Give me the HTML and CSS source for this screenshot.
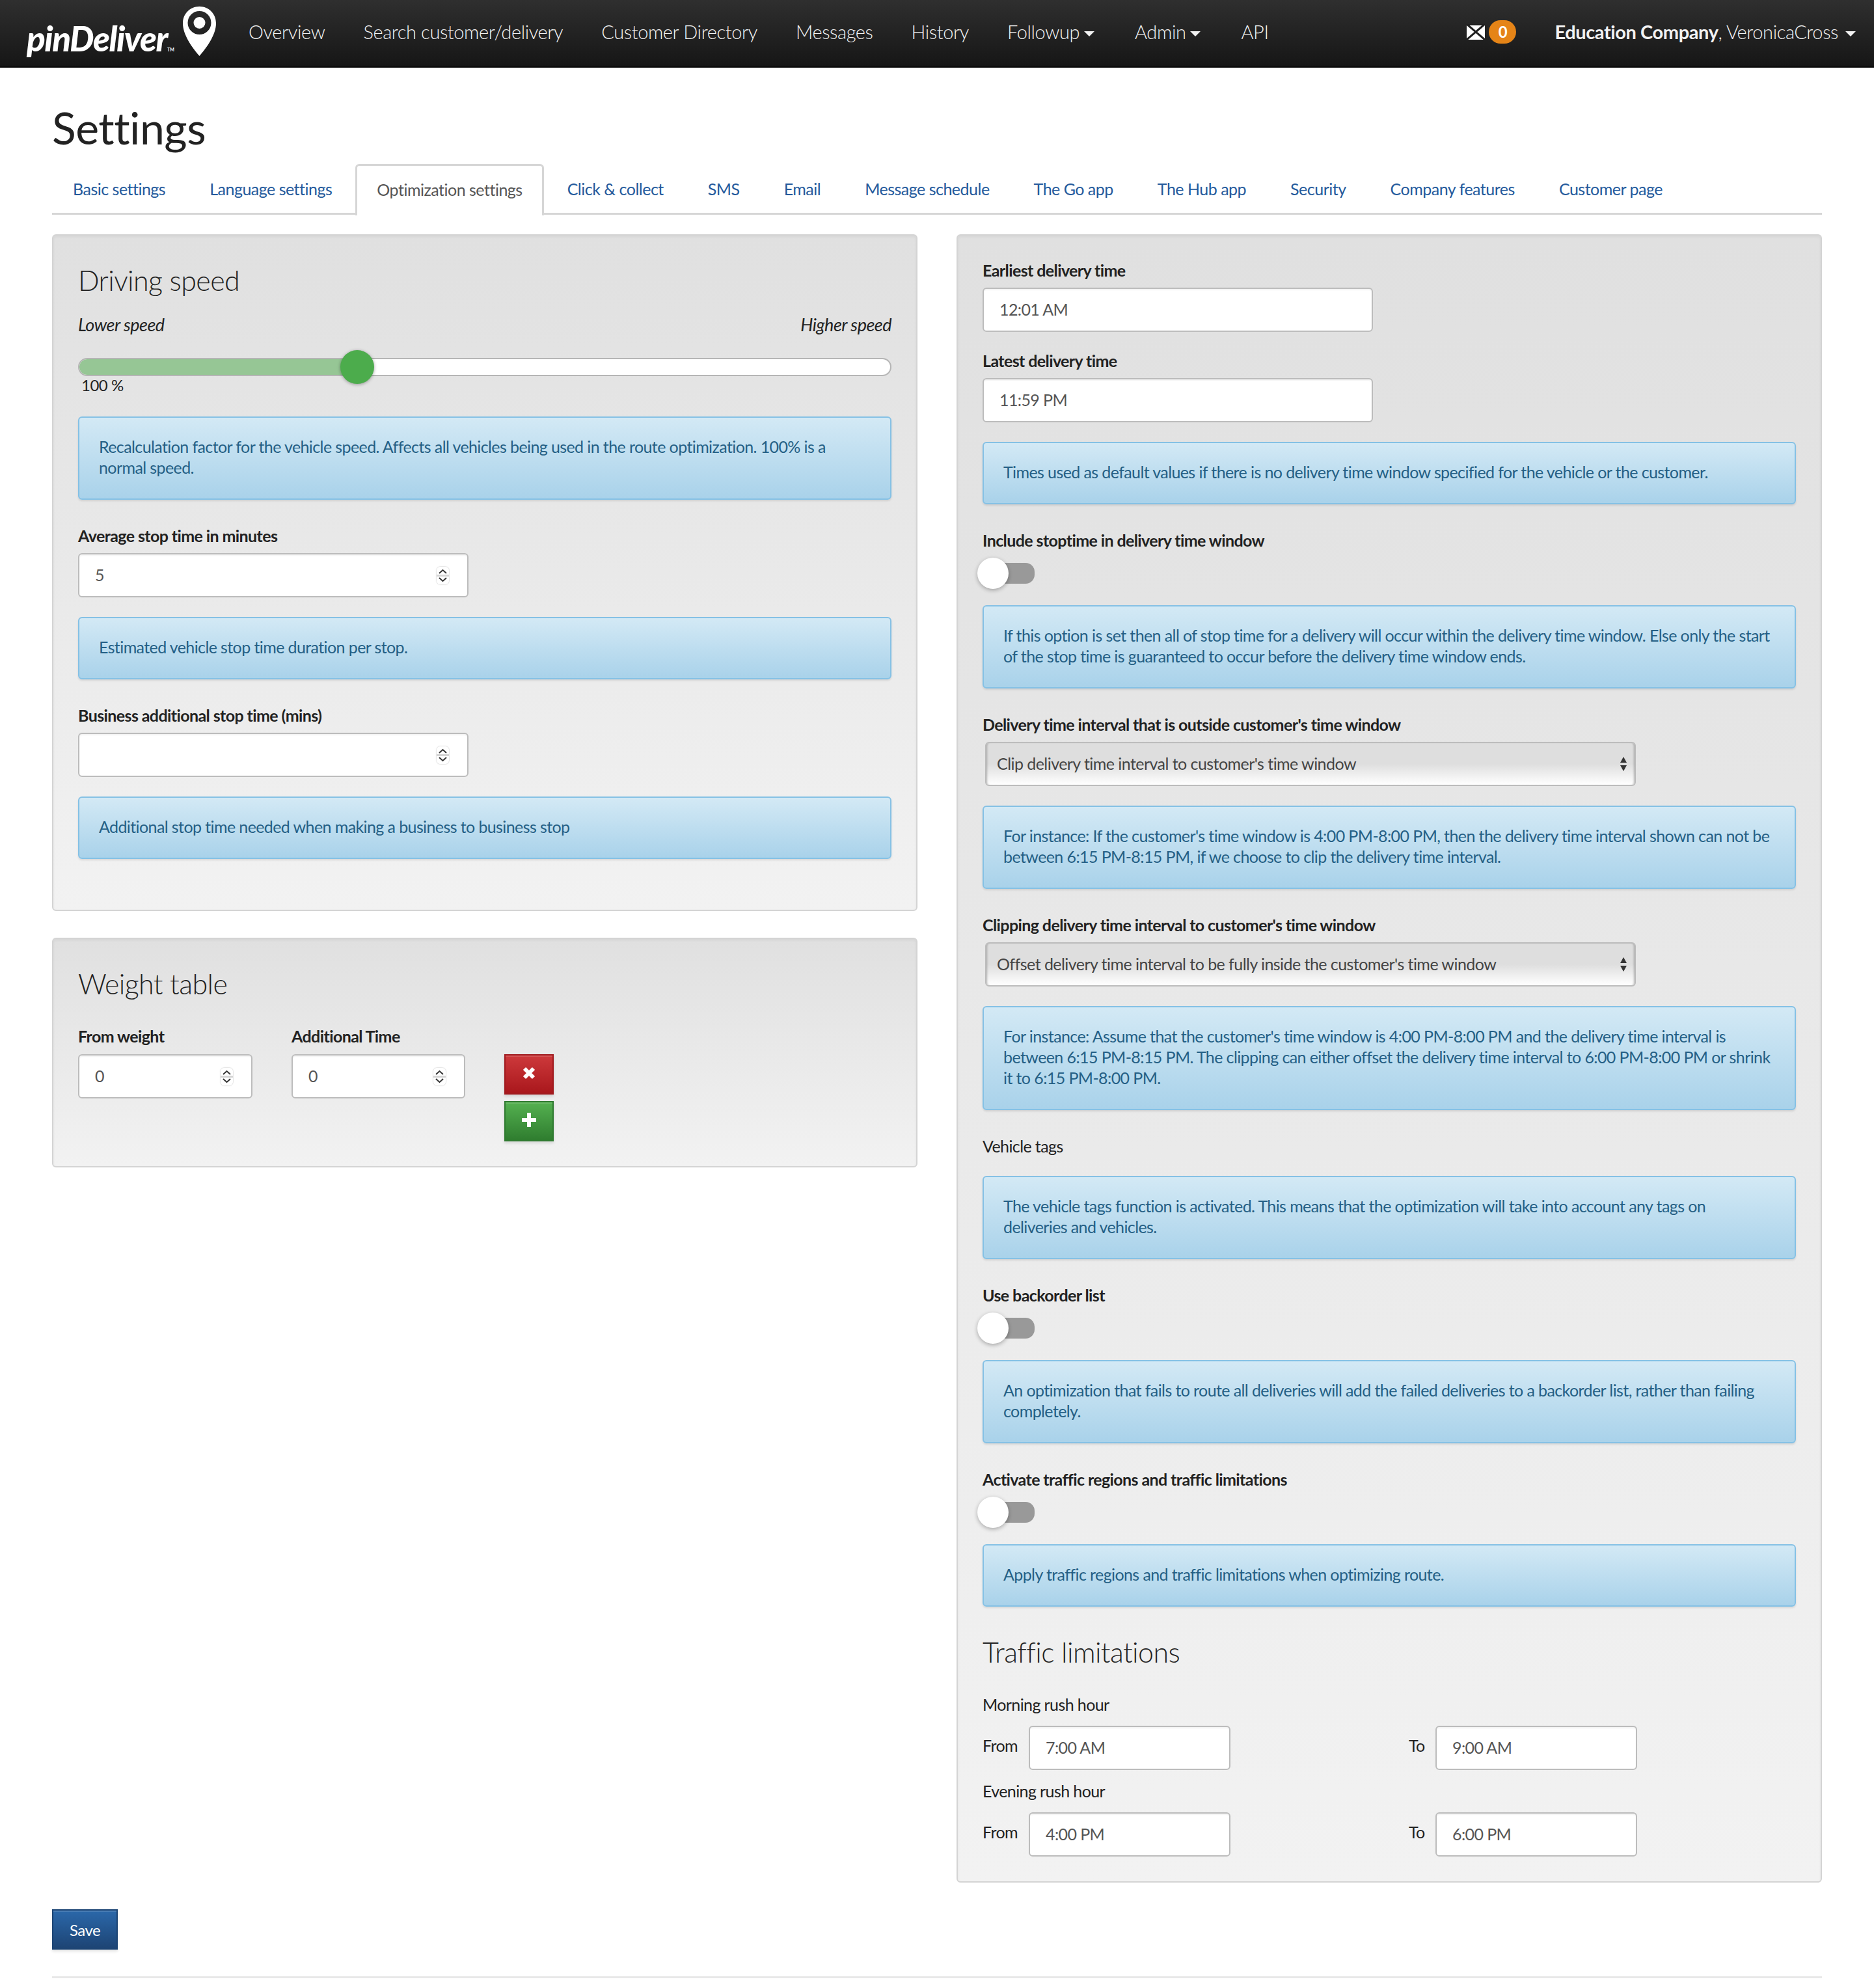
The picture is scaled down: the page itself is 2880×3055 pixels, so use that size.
FILE: index.html
```html
<!DOCTYPE html>
<html lang="en">
<head>
<meta charset="utf-8">
<title>Settings</title>
<link rel="stylesheet" href="styles.css">
</head>
<body>
<header class="navbar">
  <a class="brand">
    <span class="brand-text">pinDeliver<sup class="tm">TM</sup></span>
    <svg class="pin" viewBox="0 0 51 76" width="51" height="76"><path fill="#fff" fill-rule="evenodd" d="M25.5 0C11 0 0 11 0 26c0 17 14 37 25.500 50C37 63 51 43 51 26 51 11 40 0 25.500 0zM25.500 7a18 18 0 1 1 0 36a18 18 0 1 1 0-36z"/><circle cx="25.500" cy="25" r="9" fill="#fff"/></svg>
  </a>
  <nav class="nav-links">
    <a>Overview</a>
    <a>Search customer/delivery</a>
    <a>Customer Directory</a>
    <a>Messages</a>
    <a>History</a>
    <a>Followup<i class="caret"></i></a>
    <a>Admin<i class="caret"></i></a>
    <a>API</a>
  </nav>
  <div class="nav-right">
    <svg class="mail" viewBox="0 0 28 24" width="28" height="24"><rect width="28" height="24" fill="#fff"/><path d="M0 0l28 24M28 0L0 24" fill="none" stroke="#1f1f1f" stroke-width="3"/><path d="M0 1h28" stroke="#1f1f1f" stroke-width="2"/></svg>
    <span class="badge">0</span>
    <span class="user"><b>Education Company</b>, VeronicaCross<i class="caret"></i></span>
  </div>
</header>

<main class="page">
  <h1 class="title">Settings</h1>
  <ul class="tabs">
    <li>Basic settings</li>
    <li>Language settings</li>
    <li class="active">Optimization settings</li>
    <li>Click &amp; collect</li>
    <li>SMS</li>
    <li>Email</li>
    <li>Message schedule</li>
    <li>The Go app</li>
    <li>The Hub app</li>
    <li>Security</li>
    <li>Company features</li>
    <li>Customer page</li>
  </ul>

  <div class="columns">
    <div class="col">
      <section class="panel panel-speed">
        <h3 class="panel-title">Driving speed</h3>
        <div class="range-labels"><em>Lower speed</em><em>Higher speed</em></div>
        <div class="slider"><div class="slider-fill"></div><div class="slider-thumb"></div></div>
        <div class="percent">100 %</div>
        <p class="alert alert-first">Recalculation factor for the vehicle speed. Affects all vehicles being used in the route optimization. 100% is a normal speed.</p>
        <label class="lbl">Average stop time in minutes</label>
        <div class="input w600">5<span class="spin"><svg viewBox="0 0 19 27" width="19" height="27"><path d="M4 10l5.500-5 5.500 5M4 17l5.500 5 5.500-5" fill="none" stroke="#333" stroke-width="2"/></svg></span></div>
        <p class="alert">Estimated vehicle stop time duration per stop.</p>
        <label class="lbl">Business additional stop time (mins)</label>
        <div class="input w600"><span class="spin"><svg viewBox="0 0 19 27" width="19" height="27"><path d="M4 10l5.500-5 5.500 5M4 17l5.500 5 5.500-5" fill="none" stroke="#333" stroke-width="2"/></svg></span></div>
        <p class="alert">Additional stop time needed when making a business to business stop</p>
      </section>

      <section class="panel panel-weight">
        <h3 class="panel-title">Weight table</h3>
        <div class="weight-row">
          <div class="weight-field">
            <label class="lbl">From weight</label>
            <div class="input">0<span class="spin"><svg viewBox="0 0 19 27" width="19" height="27"><path d="M4 10l5.500-5 5.500 5M4 17l5.500 5 5.500-5" fill="none" stroke="#333" stroke-width="2"/></svg></span></div>
          </div>
          <div class="weight-field">
            <label class="lbl">Additional Time</label>
            <div class="input">0<span class="spin"><svg viewBox="0 0 19 27" width="19" height="27"><path d="M4 10l5.500-5 5.500 5M4 17l5.500 5 5.500-5" fill="none" stroke="#333" stroke-width="2"/></svg></span></div>
          </div>
          <div class="weight-actions">
            <button class="btn btn-red"><svg viewBox="0 0 22 22" width="22" height="22"><path d="M4 4l14 14M18 4L4 18" stroke="#fff" stroke-width="6" fill="none"/></svg></button>
            <button class="btn btn-green"><svg viewBox="0 0 24 24" width="24" height="24"><path d="M12 1v22M1 12h22" stroke="#fff" stroke-width="6" fill="none"/></svg></button>
          </div>
        </div>
      </section>
    </div>

    <section class="panel panel-right">
      <label class="lbl">Earliest delivery time</label>
      <div class="input w600 stack">12:01 AM</div>
      <label class="lbl">Latest delivery time</label>
      <div class="input w600">11:59 PM</div>
      <p class="alert">Times used as default values if there is no delivery time window specified for the vehicle or the customer.</p>

      <label class="lbl">Include stoptime in delivery time window</label>
      <div class="toggle"><span class="toggle-knob"></span></div>
      <p class="alert">If this option is set then all of stop time for a delivery will occur within the delivery time window. Else only the start of the stop time is guaranteed to occur before the delivery time window ends.</p>

      <label class="lbl">Delivery time interval that is outside customer's time window</label>
      <div class="select">Clip delivery time interval to customer's time window<span class="updown"></span></div>
      <p class="alert">For instance: If the customer's time window is 4:00 PM-8:00 PM, then the delivery time interval shown can not be between 6:15 PM-8:15 PM, if we choose to clip the delivery time interval.</p>

      <label class="lbl">Clipping delivery time interval to customer's time window</label>
      <div class="select">Offset delivery time interval to be fully inside the customer's time window<span class="updown"></span></div>
      <p class="alert">For instance: Assume that the customer's time window is 4:00 PM-8:00 PM and the delivery time interval is between 6:15 PM-8:15 PM. The clipping can either offset the delivery time interval to 6:00 PM-8:00 PM or shrink it to 6:15 PM-8:00 PM.</p>

      <label class="lbl plain tags">Vehicle tags</label>
      <p class="alert">The vehicle tags function is activated. This means that the optimization will take into account any tags on<br>deliveries and vehicles.</p>

      <label class="lbl">Use backorder list</label>
      <div class="toggle"><span class="toggle-knob"></span></div>
      <p class="alert">An optimization that fails to route all deliveries will add the failed deliveries to a backorder list, rather than failing completely.</p>

      <label class="lbl">Activate traffic regions and traffic limitations</label>
      <div class="toggle"><span class="toggle-knob"></span></div>
      <p class="alert">Apply traffic regions and traffic limitations when optimizing route.</p>

      <h3 class="panel-title traffic">Traffic limitations</h3>
      <label class="lbl plain rush">Morning rush hour</label>
      <div class="rush-row">
        <div class="rush-cell"><span class="from">From</span><div class="input w310">7:00 AM</div></div>
        <div class="rush-cell"><span class="to">To</span><div class="input w310">9:00 AM</div></div>
      </div>
      <label class="lbl plain rush">Evening rush hour</label>
      <div class="rush-row">
        <div class="rush-cell"><span class="from">From</span><div class="input w310">4:00 PM</div></div>
        <div class="rush-cell"><span class="to">To</span><div class="input w310">6:00 PM</div></div>
      </div>
    </section>
  </div>

  <button class="btn btn-save">Save</button>
  <hr class="rule">
</main>
</body>
</html>
```
FILE: styles.css
```css
* { box-sizing: border-box; }
html, body { margin: 0; padding: 0; }
body { font-family: Lato, "Open Sans", sans-serif; font-size: 25px; line-height: 32px; color: #222; background: #fff; letter-spacing: -0.6px; }

.navbar { height: 104px; display: flex; align-items: center; position: relative; background: linear-gradient(#2f2f2f, #161616); border-bottom: 3px solid #0b0b0b; color: #f2f2f2; }
.brand { display: flex; width: 352px; height: 101px; flex: none; position: relative; }
.brand-text { position: absolute; left: 41px; top: 24px; font-weight: 900; font-style: italic; font-size: 53px; line-height: 70px; color: #fff; letter-spacing: -1.500px; }
.tm { font-size: 7px; font-weight: 700; font-style: normal; letter-spacing: 0; vertical-align: baseline; line-height: 0; }
.pin { position: absolute; left: 281px; top: 10px; }
.nav-links { display: flex; gap: 59px; padding-left: 30px; font-weight: 300; font-size: 29px; letter-spacing: -0.4px; position: relative; top: -2px; }
.caret { display: inline-block; width: 0; height: 0; margin: 0 3px 0 7px; vertical-align: middle; border-left: 8px solid transparent; border-right: 8px solid transparent; border-top: 8px solid currentColor; }
.nav-right { margin-left: auto; display: flex; align-items: center; padding-right: 28px; position: relative; top: -2px; }
.mail { margin-right: 6px; }
.badge { width: 42px; height: 36px; border-radius: 18px; background: #e58417; color: #fff; font-weight: 700; font-size: 24px; line-height: 36px; text-align: center; margin-right: 59px; }
.user { font-size: 29px; font-weight: 300; letter-spacing: -0.4px; white-space: nowrap; }
.user b { font-weight: 700; }
.user .caret { margin: 0 0 0 11px; }

.page { padding: 0 80px; }
.title { margin: 0; padding-top: 52px; font-weight: 400; font-size: 68px; line-height: 80px; letter-spacing: -0.5px; color: #222; height: 148px; }

.tabs { list-style: none; margin: 0 0 30px; padding: 0; display: flex; gap: 4px; border-bottom: 3px solid #d6d6d6; height: 78px; letter-spacing: -0.5px; }
.tabs li { padding: 0 32px; height: 78px; line-height: 76px; color: #245a9c; white-space: nowrap; }
.tabs li.active { color: #555; background: #fff; border: 3px solid #d6d6d6; border-bottom: 0; border-radius: 6px 6px 0 0; padding: 0 30px; line-height: 72px; height: 79px; }

.columns { display: grid; grid-template-columns: 1330px 1330px; gap: 60px; align-items: start; }
.panel { background: linear-gradient(#e0e0e0, #f2f2f2); border: 2px solid #d4d4d4; border-radius: 6px; padding: 38px; box-shadow: inset 0 2px 4px rgba(0,0,0,.05); }
.panel-speed { height: 1040px; }
.panel-weight { margin-top: 41px; height: 353px; }
.panel-right { height: 2533px; padding-top: 36px; }
.panel-title { margin: 7px 0 0; font-weight: 300; font-size: 43px; line-height: 48px; letter-spacing: -0.6px; color: #222; }
.range-labels { display: flex; justify-content: space-between; margin-top: 28px; font-size: 27px; letter-spacing: -0.5px; }
.slider { height: 28px; margin-top: 35px; border: 2px solid #b5b5b5; border-radius: 14px; background: #fff; position: relative; }
.slider-fill { width: 427px; height: 100%; background: #96c695; border-radius: 12px 0 0 12px; }
.slider-thumb { position: absolute; left: 401px; top: -14px; width: 52px; height: 52px; border-radius: 50%; background: #4cac4c; box-shadow: 0 1px 5px rgba(0,0,0,.35); }
.percent { margin: -2px 0 0 5px; font-size: 24px; letter-spacing: -0.5px; }

.alert { margin: 30px 0 38px; padding: 28px 30px 32px; border: 2px solid #85c1e5; border-radius: 6px; background: linear-gradient(#d3e9f5, #a9d2ea); color: #245f85; box-shadow: 0 2px 3px rgba(0,0,0,.1); }
.alert-first { margin-top: 32px; }

.lbl { display: block; font-weight: 700; padding-top: 1px; margin-bottom: 11px; color: #222; }
.lbl.plain { font-weight: 400; }
.lbl.tags { margin-bottom: 0; padding-top: 1px; }
.lbl.rush { margin-bottom: 17px; }
.panel-title.traffic { margin-top: 46px; margin-bottom: 39px; }

.input { position: relative; height: 68px; border: 2px solid #bcbcbc; border-radius: 6px; background: #fff; padding: 0 24px; line-height: 62px; color: #555; box-shadow: inset 0 2px 2px rgba(0,0,0,.05); }
.w600 { width: 600px; }
.w310 { width: 310px; }
.stack { margin-bottom: 27px; }
.spin { position: absolute; right: 28px; top: 19px; width: 19px; height: 27px; border-radius: 6px; background: linear-gradient(#fff 46%, #d4d4d4 46%, #d4d4d4 54%, #fff 54%); display: block; line-height: 0; box-shadow: 0 0 2px rgba(0,0,0,.35); }

.weight-row { display: flex; align-items: flex-start; margin-top: 39px; }
.weight-field { width: 268px; margin-right: 60px; }
.weight-field + .weight-field { width: 267px; }
.weight-field .lbl { margin-bottom: 12px; }
.weight-actions { display: flex; flex-direction: column; gap: 10px; padding-top: 45px; }

.btn { display: flex; align-items: center; justify-content: center; padding: 0; font-family: inherit; border: 2px solid; box-shadow: inset 0 2px 0 rgba(255,255,255,.14), 0 3px 4px rgba(0,0,0,.1); }
.btn-red { width: 76px; height: 62px; padding-bottom: 4px; border-color: #a01a1e; background: linear-gradient(#cd393b, #a9171c); }
.btn-green { width: 76px; height: 62px; padding-bottom: 4px; border-color: #2f7a30; background: linear-gradient(#54b050, #2f7d2f); }
.btn-save { width: 101px; height: 62px; margin-top: 41px; border-color: #1c4473; background: linear-gradient(#2b68aa, #1d4474); color: #fff; font-size: 24px; font-weight: 400; letter-spacing: -0.5px; }

.toggle { position: relative; width: 80px; height: 43px; margin-bottom: 0; }
.toggle::before { content: ""; position: absolute; left: 0; top: 8px; width: 80px; height: 32px; border-radius: 14px; background: #999; }
.toggle-knob { position: absolute; left: -8px; top: 0; width: 48px; height: 48px; border-radius: 50%; background: #fff; box-shadow: 0 2px 6px rgba(0,0,0,.3); }
.toggle + .alert { margin-top: 30px; }

.select { position: relative; width: 1000px; height: 68px; margin-left: 4px; border: 2px solid #bcbcbc; border-radius: 6px; background: linear-gradient(#dedede 50%, #fff); padding-left: 16px; line-height: 62px; color: #444; letter-spacing: -0.55px; box-shadow: inset 3px 0 3px -2px rgba(0,0,0,.25), inset -3px 0 3px -2px rgba(0,0,0,.25); }
.updown { position: absolute; right: 12px; top: 21px; width: 10px; height: 22px; }
.updown::before, .updown::after { content: ""; position: absolute; left: 0; border-left: 5px solid transparent; border-right: 5px solid transparent; }
.updown::before { top: 0; border-bottom: 9px solid #333; }
.updown::after { bottom: 0; border-top: 9px solid #333; }

.rush-row { display: grid; grid-template-columns: 595px 595px; gap: 60px; margin-bottom: 15px; }
.rush-cell { display: flex; }
.rush-cell span { line-height: 60px; }
.from { width: 71px; }
.to { width: 41px; }

.rule { border: 0; border-top: 3px solid #e8e8e8; margin: 41px 0 16px; }
```
